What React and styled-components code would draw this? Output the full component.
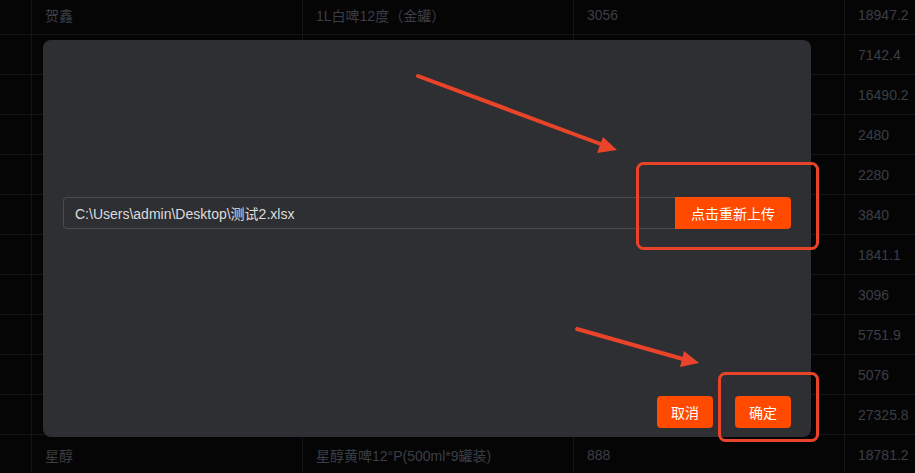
import React from 'react';
import styled, { createGlobalStyle } from 'styled-components';

const GlobalStyle = createGlobalStyle`
  html, body {
    margin: 0;
    padding: 0;
    background: #050506;
    overflow: hidden;
  }
  body {
    font-family: "Liberation Sans", "Noto Sans CJK SC", Arial, sans-serif;
    font-size: 14px;
  }
`

const Page = styled.div`
  position: relative;
  width: 915px;
  height: 473px;
  overflow: hidden;
`

const Table = styled.div`
  margin-top: -5px;
`

const Row = styled.div`
  display: grid;
  grid-template-columns: 31px 271px 271px 271px 1fr;
  height: 40px;
  border-bottom: 1px solid #141518;
  box-sizing: border-box;
`

const Cell = styled.div`
  display: flex;
  align-items: center;
  padding-left: 13px;
  border-left: 1px solid #141518;
  color: #3b3e45;
  white-space: nowrap;
  overflow: hidden;
  &:first-child {
    border-left: none;
  }
`

const Modal = styled.div`
  position: absolute;
  left: 43px;
  top: 40px;
  width: 768px;
  height: 397px;
  box-sizing: border-box;
  padding: 0 20px 9px;
  background: #2e2f33;
  border-radius: 8px;
  display: flex;
  flex-direction: column;
`

const Body = styled.div`
  flex: 1;
  padding-top: 157px;
`

const UploadRow = styled.div`
  display: flex;
  height: 32px;
`

const PathInput = styled.div`
  flex: 1;
  display: flex;
  align-items: center;
  padding-left: 11px;
  border: 1px solid #4a4b50;
  border-right: none;
  border-radius: 4px 0 0 4px;
  color: #dcdcdc;
  font-size: 14px;
`

const Button = styled.button`
  height: 32px;
  width: ${p => p.w}px;
  border: 0;
  border-radius: ${p => p.joined ? '0 4px 4px 0' : '4px'};
  background: #ff4a00;
  color: #fff;
  font-family: "Noto Sans CJK SC", "Liberation Sans", sans-serif;
  font-size: 14px;
  padding: 0;
  cursor: pointer;
`

const Footer = styled.div`
  display: flex;
  justify-content: flex-end;
  gap: 22px;
`

const Marks = styled.svg`
  position: absolute;
  left: 0;
  top: 0;
  pointer-events: none;
`

const rows = [
  ['贺鑫', '1L白啤12度（金罐）', '3056', '18947.2'],
  ['', '', '', '7142.4'],
  ['', '', '', '16490.2'],
  ['', '', '', '2480'],
  ['', '', '', '2280'],
  ['', '', '', '3840'],
  ['', '', '', '1841.1'],
  ['', '', '', '3096'],
  ['', '', '', '5751.9'],
  ['', '', '', '5076'],
  ['', '', '', '27325.8'],
  ['星醇', '星醇黄啤12°P(500ml*9罐装)', '888', '18781.2'],
]

const RED = '#e9432a'

export default function App() {
  return (
    <Page>
      <GlobalStyle />
      <Table>
        {rows.map((r, i) => (
          <Row key={i}>
            <Cell />
            {r.map((c, j) => <Cell key={j}>{c}</Cell>)}
          </Row>
        ))}
      </Table>

      <Modal>
        <Body>
          <UploadRow>
            <PathInput>C:\Users\admin\Desktop\测试2.xlsx</PathInput>
            <Button w={116} joined>点击重新上传</Button>
          </UploadRow>
        </Body>
        <Footer>
          <Button w={56}>取消</Button>
          <Button w={56}>确定</Button>
        </Footer>
      </Modal>

      <Marks width="915" height="473">
        <line x1="418" y1="76" x2="606" y2="146" stroke={RED} strokeWidth="4" strokeLinecap="round" />
        <polygon points="603,137 617,150 597,153" fill={RED} />
        <rect x="637.5" y="163.5" width="180" height="85" rx="6" fill="none" stroke={RED} strokeWidth="3" />
        <line x1="577" y1="329" x2="690" y2="361" stroke={RED} strokeWidth="4" strokeLinecap="round" />
        <polygon points="684,351 699,363 680,367" fill={RED} />
        <rect x="719.5" y="373.5" width="98" height="67" rx="6" fill="none" stroke={RED} strokeWidth="3" />
      </Marks>
    </Page>
  );
}
